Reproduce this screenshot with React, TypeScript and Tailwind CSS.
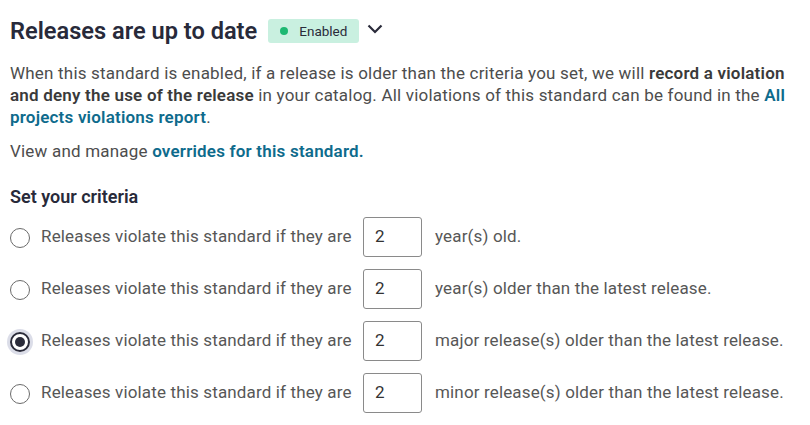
import React from "react";

const rows = [
  { unit: "year(s) old.", checked: false },
  { unit: "year(s) older than the latest release.", checked: false },
  { unit: "major release(s) older than the latest release.", checked: true },
  { unit: "minor release(s) older than the latest release.", checked: false },
];

export default function App() {
  return (
    <div className="min-h-screen bg-white px-[10px] pt-[15px] font-['Roboto',sans-serif] text-[#4d4d4d]">
      {/* Header */}
      <div className="flex h-[32px] items-center">
        <h1 className="text-[23.6px] font-semibold leading-[32px] text-[#282a3a]">Releases are up to date</h1>
        <span className="ml-[11px] flex h-[24px] w-[91px] items-center rounded-[3px] bg-[#c9f0e0] pl-[12px] text-[13.5px] text-[#2a2b3a]">
          <span className="h-[8px] w-[8px] rounded-full bg-[#1db872]" />
          <span className="ml-[11px]">Enabled</span>
        </span>
        <svg width="16" height="10" viewBox="0 0 16 10" className="ml-[8px] mt-[-4px]">
          <path d="M1.5 1.5l6.5 6.5 6.5-6.5" fill="none" stroke="#2a2b3a" strokeWidth="2.2" />
        </svg>
      </div>

      {/* Description */}
      <div className="mt-[15px] w-[795px] text-[17px] leading-[22px] tracking-[0.2px]">
        <p>
          When this standard is enabled, if a release is older than the criteria you set, we will{" "}
          <b className="font-semibold text-[#3a3a3a]">record a violation and deny the use of the release</b> in your
          catalog. All violations of this standard can be found in the{" "}
          <a className="font-semibold text-[#0e6b8c]">All projects violations report</a>.
        </p>
        <p className="mt-[12px]">
          View and manage <a className="font-semibold text-[#0e6b8c]">overrides for this standard.</a>
        </p>
      </div>

      {/* Criteria */}
      <h2 className="mt-[23px] text-[18px] font-semibold leading-[24px] text-[#282a3a]">Set your criteria</h2>
      <div className="mt-[8px] flex flex-col gap-[12px]">
        {rows.map((r, i) => (
          <label key={i} className="flex h-[40px] items-center text-[17px] tracking-[0.15px] text-[#575757]">
            <span
              className={
                r.checked
                  ? "mt-[2px] flex h-[20px] w-[20px] items-center justify-center rounded-full border-[2px] border-[#2a2b3a] shadow-[0_0_0_3px_rgba(90,100,150,0.22)]"
                  : "mt-[2px] h-[20px] w-[20px] rounded-full border-[1.5px] border-[#6b6b6b]"
              }
            >
              {r.checked && <span className="h-[10px] w-[10px] rounded-full bg-[#2a2b3a]" />}
            </span>
            <span className="ml-[11px] w-[322px]">Releases violate this standard if they are</span>
            <span className="flex h-[40px] w-[59px] items-center rounded-[3px] border border-[#8a8a8a] pl-[11px] text-[#333]">
              2
            </span>
            <span className="ml-[13px]">{r.unit}</span>
          </label>
        ))}
      </div>
    </div>
  );
}
